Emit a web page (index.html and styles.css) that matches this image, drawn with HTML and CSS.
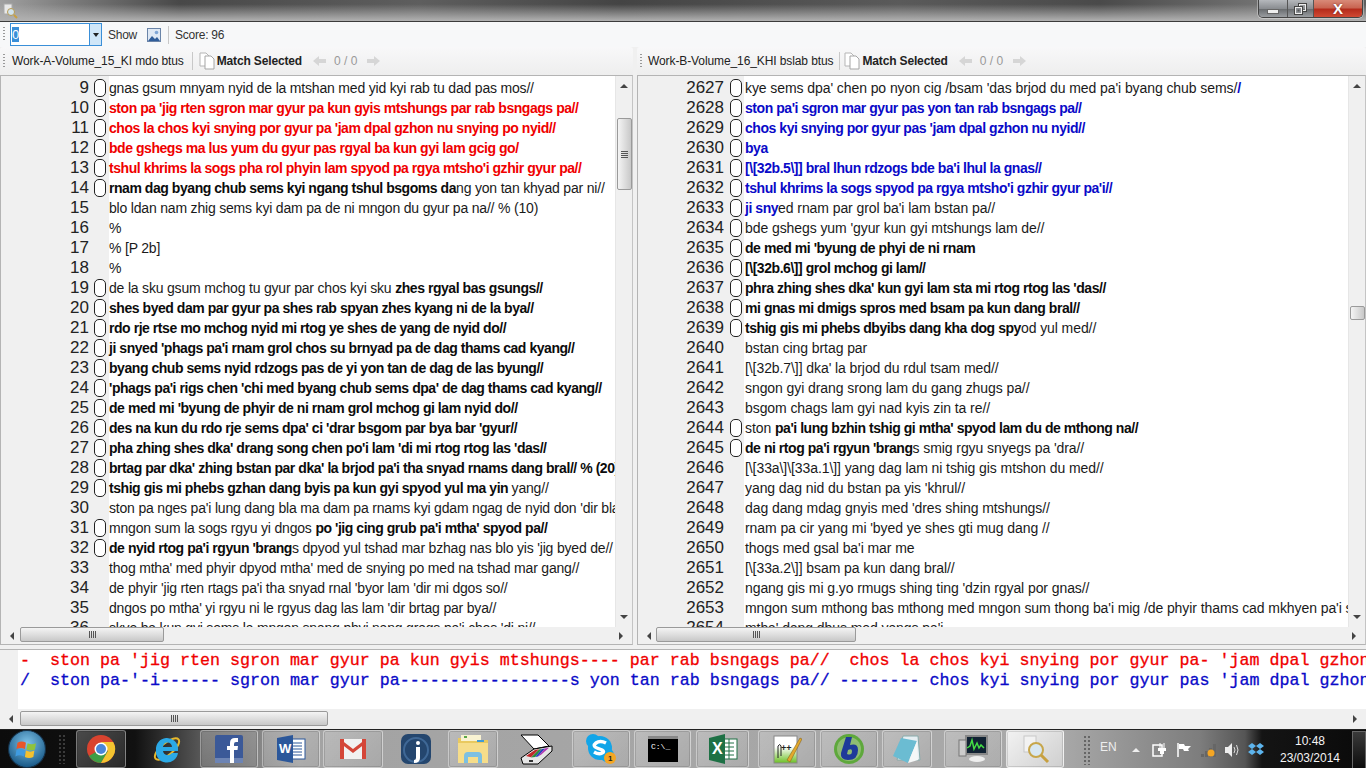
FILE: index.html
```html
<!DOCTYPE html>
<html lang="en">
<head>
<meta charset="utf-8">
<title>Text comparison</title>
<link rel="stylesheet" href="styles.css">
</head>
<body>
<div class="window">
  <header class="titlebar">
    <svg class="app-icon" width="16" height="16" viewBox="0 0 16 16"><rect x="2" y="1" width="8" height="10" fill="#e8e8e8" stroke="#aaa"/><circle cx="9" cy="9" r="3.5" fill="#cfe2ee" stroke="#b89a50"/><path d="M12 12l3 3" stroke="#c9a040" stroke-width="2"/></svg>
    <div class="controls">
      <span class="ctl ctl-min"><i class="glyph-min"></i></span>
      <span class="ctl ctl-max"><svg width="13" height="12" viewBox="0 0 13 12"><rect x="4.500" y=".5" width="8" height="8" fill="none" stroke="#444"/><rect x="5.500" y="1.500" width="6" height="6" fill="none" stroke="#eee"/><rect x=".5" y="3.500" width="8" height="8" fill="#8b8f94" stroke="#444"/><rect x="1.500" y="4.500" width="6" height="6" fill="none" stroke="#eee"/><rect x="3.500" y="6.500" width="2" height="2" fill="#555"/></svg></span>
      <span class="ctl ctl-close">X</span>
    </div>
  </header>

  <div class="toolbar">
    <span class="grip"></span>
    <div class="combo"><span class="combo-text"><span class="sel">0</span></span><span class="combo-btn"><i class="down"></i></span></div>
    <span class="tb-label">Show</span>
    <svg class="pic" width="14" height="14" viewBox="0 0 14 14"><rect x=".5" y=".5" width="13" height="13" fill="#dfe9f5" stroke="#6a84a8"/><path d="M1 13l4-5 3 3 2-2 3 4z" fill="#2f5d9a"/><circle cx="9.500" cy="4.500" r="1.800" fill="#7fa6d6"/></svg>
    <span class="tb-sep"></span>
    <span class="tb-label">Score: 96</span>
  </div>

  <div class="split">
    <section class="pane pane-a">
      <div class="pane-head">
        <span class="grip"></span>
        <span class="work">Work-A-Volume_15_KI mdo btus</span>
        <span class="tb-sep"></span>
        <svg class="doc" width="18" height="18" viewBox="0 0 18 18"><path d="M2 1h6l3 3v10H2z" fill="#fff" stroke="#b5b5b5"/><path d="M7 4h6l3 3v10H7z" fill="#fff" stroke="#a5a5a5"/></svg>
        <strong class="match">Match Selected</strong>
        <svg class="arrow" width="16" height="12" viewBox="0 0 16 12"><path d="M1 6l6-5v3h7v4H7v3z" fill="#d6d6d6"/></svg>
        <span class="count">0 / 0</span>
        <svg class="arrow" width="16" height="12" viewBox="0 0 16 12"><path d="M15 6L9 1v3H2v4h7v3z" fill="#d6d6d6"/></svg>
      </div>
      <div class="pane-frame">
        <div class="pane-body">
          <div class="list">
            <div class="row"><span class="no">9</span><span class="mark"></span><span class="txt">gnas gsum mnyam nyid de la mtshan med yid kyi rab tu dad pas mos//</span></div>
            <div class="row red"><span class="no">10</span><span class="mark"></span><span class="txt">ston pa 'jig rten sgron mar gyur pa kun gyis mtshungs par rab bsngags pa//</span></div>
            <div class="row red"><span class="no">11</span><span class="mark"></span><span class="txt">chos la chos kyi snying por gyur pa 'jam dpal gzhon nu snying po nyid//</span></div>
            <div class="row red"><span class="no">12</span><span class="mark"></span><span class="txt">bde gshegs ma lus yum du gyur pas rgyal ba kun gyi lam gcig go/</span></div>
            <div class="row red"><span class="no">13</span><span class="mark"></span><span class="txt">tshul khrims la sogs pha rol phyin lam spyod pa rgya mtsho'i gzhir gyur pa//</span></div>
            <div class="row"><span class="no">14</span><span class="mark"></span><span class="txt"><b>rnam dag byang chub sems kyi ngang tshul bsgoms da</b>ng yon tan khyad par ni//</span></div>
            <div class="row"><span class="no">15</span><span class="nomark"></span><span class="txt">blo ldan nam zhig sems kyi dam pa de ni mngon du gyur pa na// % (10)</span></div>
            <div class="row"><span class="no">16</span><span class="nomark"></span><span class="txt">%</span></div>
            <div class="row"><span class="no">17</span><span class="nomark"></span><span class="txt">% [P 2b]</span></div>
            <div class="row"><span class="no">18</span><span class="nomark"></span><span class="txt">%</span></div>
            <div class="row"><span class="no">19</span><span class="mark"></span><span class="txt">de la sku gsum mchog tu gyur par chos kyi sku <b>zhes rgyal bas gsungs//</b></span></div>
            <div class="row"><span class="no">20</span><span class="mark"></span><span class="txt"><b>shes byed dam par gyur pa shes rab spyan zhes kyang ni de la bya//</b></span></div>
            <div class="row"><span class="no">21</span><span class="mark"></span><span class="txt"><b>rdo rje rtse mo mchog nyid mi rtog ye shes de yang de nyid do//</b></span></div>
            <div class="row"><span class="no">22</span><span class="mark"></span><span class="txt"><b>ji snyed 'phags pa'i rnam grol chos su brnyad pa de dag thams cad kyang//</b></span></div>
            <div class="row"><span class="no">23</span><span class="mark"></span><span class="txt"><b>byang chub sems nyid rdzogs pas de yi yon tan de dag de las byung//</b></span></div>
            <div class="row"><span class="no">24</span><span class="mark"></span><span class="txt"><b>'phags pa'i rigs chen 'chi med byang chub sems dpa' de dag thams cad kyang//</b></span></div>
            <div class="row"><span class="no">25</span><span class="mark"></span><span class="txt"><b>de med mi 'byung de phyir de ni rnam grol mchog gi lam nyid do//</b></span></div>
            <div class="row"><span class="no">26</span><span class="mark"></span><span class="txt"><b>des na kun du rdo rje sems dpa' ci 'drar bsgom par bya bar 'gyur//</b></span></div>
            <div class="row"><span class="no">27</span><span class="mark"></span><span class="txt"><b>pha zhing shes dka' drang song chen po'i lam 'di mi rtog rtog las 'das//</b></span></div>
            <div class="row"><span class="no">28</span><span class="mark"></span><span class="txt"><b>brtag par dka' zhing bstan par dka' la brjod pa'i tha snyad rnams dang bral// % (20)</b></span></div>
            <div class="row"><span class="no">29</span><span class="mark"></span><span class="txt"><b>tshig gis mi phebs gzhan dang byis pa kun gyi spyod yul ma yin </b>yang//</span></div>
            <div class="row"><span class="no">30</span><span class="nomark"></span><span class="txt">ston pa nges pa'i lung dang bla ma dam pa rnams kyi gdam ngag de nyid don 'dir bla ma'i//</span></div>
            <div class="row"><span class="no">31</span><span class="mark"></span><span class="txt">mngon sum la sogs rgyu yi dngos <b>po 'jig cing grub pa'i mtha' spyod pa//</b></span></div>
            <div class="row"><span class="no">32</span><span class="mark"></span><span class="txt"><b>de nyid rtog pa'i rgyun 'brang</b>s dpyod yul tshad mar bzhag nas blo yis 'jig byed de//</span></div>
            <div class="row"><span class="no">33</span><span class="nomark"></span><span class="txt">thog mtha' med phyir dpyod mtha' med de snying po med na tshad mar gang//</span></div>
            <div class="row"><span class="no">34</span><span class="nomark"></span><span class="txt">de phyir 'jig rten rtags pa'i tha snyad rnal 'byor lam 'dir mi dgos so//</span></div>
            <div class="row"><span class="no">35</span><span class="nomark"></span><span class="txt">dngos po mtha' yi rgyu ni le rgyus dag las lam 'dir brtag par bya//</span></div>
            <div class="row"><span class="no">36</span><span class="nomark"></span><span class="txt">skye ba kun gyi sems la mngon snang phyi nang grags pa'i chos 'di ni//</span></div>
          </div>
          <div class="vscroll">
            <i class="tri up"></i>
            <div class="vtrack"><div class="vthumb vthumb-a"><i class="grip-h"></i></div></div>
            <i class="tri down2"></i>
          </div>
        </div>
        <div class="hscroll">
          <i class="tri left"></i>
          <div class="htrack"><div class="hthumb hthumb-a"><i class="grip-v"></i></div></div>
          <i class="tri right"></i>
        </div>
      </div>
    </section>

    <section class="pane pane-b">
      <div class="pane-head">
        <span class="grip"></span>
        <span class="work">Work-B-Volume_16_KHI bslab btus</span>
        <span class="tb-sep"></span>
        <svg class="doc" width="18" height="18" viewBox="0 0 18 18"><path d="M2 1h6l3 3v10H2z" fill="#fff" stroke="#b5b5b5"/><path d="M7 4h6l3 3v10H7z" fill="#fff" stroke="#a5a5a5"/></svg>
        <strong class="match">Match Selected</strong>
        <svg class="arrow" width="16" height="12" viewBox="0 0 16 12"><path d="M1 6l6-5v3h7v4H7v3z" fill="#d6d6d6"/></svg>
        <span class="count">0 / 0</span>
        <svg class="arrow" width="16" height="12" viewBox="0 0 16 12"><path d="M15 6L9 1v3H2v4h7v3z" fill="#d6d6d6"/></svg>
      </div>
      <div class="pane-frame">
        <div class="pane-body">
          <div class="list">
            <div class="row"><span class="no">2627</span><span class="mark"></span><span class="txt">kye sems dpa' chen po nyon cig /bsam 'das brjod du med pa'i byang chub sems/<b class="ink-blue">/</b></span></div>
            <div class="row blue"><span class="no">2628</span><span class="mark"></span><span class="txt">ston pa'i sgron mar gyur pas yon tan rab bsngags pa//</span></div>
            <div class="row blue"><span class="no">2629</span><span class="mark"></span><span class="txt">chos kyi snying por gyur pas 'jam dpal gzhon nu nyid//</span></div>
            <div class="row blue"><span class="no">2630</span><span class="mark"></span><span class="txt">bya</span></div>
            <div class="row blue"><span class="no">2631</span><span class="mark"></span><span class="txt">[\[32b.5\]] bral lhun rdzogs bde ba'i lhul la gnas//</span></div>
            <div class="row blue"><span class="no">2632</span><span class="mark"></span><span class="txt">tshul khrims la sogs spyod pa rgya mtsho'i gzhir gyur pa'i//</span></div>
            <div class="row"><span class="no">2633</span><span class="mark"></span><span class="txt"><b class="ink-blue">ji sny</b>ed rnam par grol ba'i lam bstan pa//</span></div>
            <div class="row"><span class="no">2634</span><span class="mark"></span><span class="txt">bde gshegs yum 'gyur kun gyi mtshungs lam de//</span></div>
            <div class="row"><span class="no">2635</span><span class="mark"></span><span class="txt"><b>de med mi 'byung de phyi de ni rnam</b></span></div>
            <div class="row"><span class="no">2636</span><span class="mark"></span><span class="txt"><b>[\[32b.6\]] grol mchog gi lam//</b></span></div>
            <div class="row"><span class="no">2637</span><span class="mark"></span><span class="txt"><b>phra zhing shes dka' kun gyi lam sta mi rtog rtog las 'das//</b></span></div>
            <div class="row"><span class="no">2638</span><span class="mark"></span><span class="txt"><b>mi gnas mi dmigs spros med bsam pa kun dang bral//</b></span></div>
            <div class="row"><span class="no">2639</span><span class="mark"></span><span class="txt"><b>tshig gis mi phebs dbyibs dang kha dog spy</b>od yul med//</span></div>
            <div class="row"><span class="no">2640</span><span class="nomark"></span><span class="txt">bstan cing brtag par</span></div>
            <div class="row"><span class="no">2641</span><span class="nomark"></span><span class="txt">[\[32b.7\]] dka' la brjod du rdul tsam med//</span></div>
            <div class="row"><span class="no">2642</span><span class="nomark"></span><span class="txt">sngon gyi drang srong lam du gang zhugs pa//</span></div>
            <div class="row"><span class="no">2643</span><span class="nomark"></span><span class="txt">bsgom chags lam gyi nad kyis zin ta re//</span></div>
            <div class="row"><span class="no">2644</span><span class="mark"></span><span class="txt">ston <b>pa'i lung bzhin tshig gi mtha' spyod lam du de mthong na//</b></span></div>
            <div class="row"><span class="no">2645</span><span class="mark"></span><span class="txt"><b>de ni rtog pa'i rgyun 'brang</b>s smig rgyu snyegs pa 'dra//</span></div>
            <div class="row"><span class="no">2646</span><span class="nomark"></span><span class="txt">[\[33a\]\[33a.1\]] yang dag lam ni tshig gis mtshon du med//</span></div>
            <div class="row"><span class="no">2647</span><span class="nomark"></span><span class="txt">yang dag nid du bstan pa yis 'khrul//</span></div>
            <div class="row"><span class="no">2648</span><span class="nomark"></span><span class="txt">dag dang mdag gnyis med 'dres shing mtshungs//</span></div>
            <div class="row"><span class="no">2649</span><span class="nomark"></span><span class="txt">rnam pa cir yang mi 'byed ye shes gti mug dang //</span></div>
            <div class="row"><span class="no">2650</span><span class="nomark"></span><span class="txt">thogs med gsal ba'i mar me</span></div>
            <div class="row"><span class="no">2651</span><span class="nomark"></span><span class="txt">[\[33a.2\]] bsam pa kun dang bral//</span></div>
            <div class="row"><span class="no">2652</span><span class="nomark"></span><span class="txt">ngang gis mi g.yo rmugs shing ting 'dzin rgyal por gnas//</span></div>
            <div class="row"><span class="no">2653</span><span class="nomark"></span><span class="txt">mngon sum mthong bas mthong med mngon sum thong ba'i mig /de phyir thams cad mkhyen pa'i spyod yul lo//</span></div>
            <div class="row"><span class="no">2654</span><span class="nomark"></span><span class="txt">mtha' dang dbus med yangs pa'i</span></div>
          </div>
          <div class="vscroll">
            <i class="tri up"></i>
            <div class="vtrack"><div class="vthumb vthumb-b"></div></div>
            <i class="tri down2"></i>
          </div>
        </div>
        <div class="hscroll">
          <i class="tri left"></i>
          <div class="htrack"><div class="hthumb hthumb-b"><i class="grip-v"></i></div></div>
          <i class="tri right"></i>
        </div>
      </div>
    </section>
  </div>

  <section class="diff">
    <div class="diff-body">
      <div class="diff-line red-d">-  ston pa 'jig rten sgron mar gyur pa kun gyis mtshungs---- par rab bsngags pa//  chos la chos kyi snying por gyur pa- 'jam dpal gzhon nu</div>
      <div class="diff-line blue-d">/  ston pa-'-i------ sgron mar gyur pa-----------------s yon tan rab bsngags pa// -------- chos kyi snying por gyur pas 'jam dpal gzhon nu</div>
    </div>
    <div class="hscroll hscroll-diff">
      <i class="tri left"></i>
      <div class="htrack"><div class="hthumb hthumb-d"><i class="grip-v"></i></div></div>
      <i class="tri right"></i>
    </div>
  </section>

  <footer class="taskbar">
    <svg class="orb" width="38" height="38" viewBox="0 0 36 36"><defs><radialGradient id="og" cx=".5" cy=".35" r=".7"><stop offset="0" stop-color="#7fc4ea"/><stop offset="1" stop-color="#0f4f7e"/></radialGradient></defs><circle cx="18" cy="18" r="17.500" fill="url(#og)" stroke="#16324a"/><path d="M9 12q4-2 8 0l-1 6q-4-2-8 0z" fill="#e8562a"/><path d="M18.500 12.500q4 2 8 0l-1 6q-4 2-8 0z" fill="#8fc33c"/><path d="M8 19q4-2 8 0l-1 6q-4-2-8 0z" fill="#3f9be0"/><path d="M17 19.500q4 2 8 0l-1 6q-4 2-8 0z" fill="#f5c12e"/></svg>
    <span class="dots"></span>
    <span class="task task-chrome dark"><svg width="30" height="30" viewBox="0 0 30 30"><circle cx="15" cy="15" r="14" fill="#d9432f"/><path d="M15 15L3 22a14 14 0 0 0 12 7l7-12z" fill="#3f9d45"/><path d="M15 8h12.200A14 14 0 0 1 15 29l7-12z" fill="#f4c430"/><circle cx="15" cy="15" r="6.500" fill="#fff"/><circle cx="15" cy="15" r="5" fill="#4a86d8"/></svg></span>
    <span class="gap8"></span>
    <span class="task task-ie plain"><svg width="34" height="32" viewBox="0 0 34 32"><ellipse cx="17" cy="16" rx="15" ry="6" fill="none" stroke="#e8b92c" stroke-width="2" transform="rotate(-40 17 16)"/><path d="M6 17a11 11 0 0 1 22-2v3H13a5 5 0 0 0 9 2h6A11 11 0 0 1 6 17zm7-3h9a4.500 4.500 0 0 0-9 0z" fill="#2ba9e6"/></svg></span>
    <span class="task task-fb"><svg width="28" height="28" viewBox="0 0 28 28"><rect width="28" height="28" rx="2" fill="#3b5998"/><rect y="23" width="28" height="5" fill="#6d84b4"/><path d="M15 28V15h-3v-4h3V8q0-5 5-5h3v4h-2q-2 0-2 2v2h4l-.5 4H19v13z" fill="#fff"/></svg></span>
    <span class="task task-word"><svg width="30" height="28" viewBox="0 0 30 28"><rect x="14" y="4" width="15" height="20" fill="#fff" stroke="#2b579a"/><path d="M17 8h9M17 11h9M17 14h9M17 17h9M17 20h9" stroke="#2b579a"/><path d="M1 3l16-3v28L1 25z" fill="#2b579a"/><text x="3" y="18" class="ico-letter">W</text></svg></span>
    <span class="task task-gmail"><svg width="26" height="22" viewBox="0 0 26 22"><rect y="1" width="26" height="20" fill="#f1f1f1"/><path d="M0 1h4v20H0zM22 1h4v20h-4z" fill="#d44638"/><path d="M0 1l13 10L26 1v4L13 15 0 5z" fill="#d44638"/></svg></span>
    <span class="task task-j plain"><svg width="30" height="30" viewBox="0 0 30 30"><rect width="30" height="30" rx="7" fill="#24466e"/><circle cx="15" cy="16" r="12" fill="none" stroke="#3f6896" stroke-width="2"/><path d="M15 13h4v11q0 5-6 5v-3q2 0 2-2z" fill="#fff"/><circle cx="17" cy="9" r="2" fill="#fff"/></svg></span>
    <span class="task task-folder"><svg width="32" height="30" viewBox="0 0 32 30"><path d="M1 4h12l2 2h16v22H1z" fill="#e9c95f"/><rect x="4" y="1" width="20" height="6" fill="#f8f2d2"/><rect x="7" y="2" width="3" height="2" fill="#5aa648"/><rect x="20" y="6" width="7" height="2" fill="#3f9bd6"/><rect x="1" y="9" width="30" height="20" fill="#f6dd8a"/><path d="M7 29v-7q0-4 4-4h10q4 0 4 4v7h-4v-6H11v6z" fill="#7cc0e2"/></svg></span>
    <span class="gap5"></span>
    <span class="task task-scan plain"><svg width="34" height="31" viewBox="0 0 34 31"><path d="M1 1h17l11 11-15 3z" fill="#fff" stroke="#000"/><path d="M1 24L14 15l18-3v5L18 30H3z" fill="#e6e6e6" stroke="#000"/><path d="M6 22l9-6 4-.7-8 8z" fill="#c0282a"/><path d="M11 23.500l8-8 3-.5-7 8z" fill="#2a8a3a"/><path d="M15 23l7-8 3-.5-7 8z" fill="#2a3fc0"/><path d="M18 22.500l7-8 4-.7-8 7z" fill="#b030b0"/><rect x="9" y="26" width="4" height="2" fill="#333"/></svg></span>
    <span class="task task-skype"><svg width="32" height="32" viewBox="0 0 32 32"><circle cx="15" cy="15" r="12" fill="#12a5e8"/><circle cx="8" cy="8" r="7" fill="#12a5e8"/><circle cx="22" cy="22" r="7" fill="#12a5e8"/><path d="M21 10q-6-3-10 0t1 5l5 2q3 2 0 3-3 2-8-1" fill="none" stroke="#fff" stroke-width="3.500"/><circle cx="25" cy="25" r="6" fill="#f5a623"/><text x="23" y="28" class="ico-badge">1</text></svg></span>
    <span class="task task-cmd"><svg width="30" height="26" viewBox="0 0 30 26"><rect width="30" height="26" fill="#000"/><rect width="30" height="3" fill="#888"/><text x="3" y="13" class="ico-term">C:\_</text></svg></span>
    <span class="gap5"></span>
    <span class="task task-excel"><svg width="30" height="30" viewBox="0 0 30 30"><rect x="14" y="5" width="15" height="20" fill="#fff" stroke="#1e7145"/><path d="M17 9h9M17 13h9M17 17h9M17 21h9M21 5v20" stroke="#1e7145"/><path d="M1 4l16-4v30L1 26z" fill="#1e7145"/><text x="4" y="20" class="ico-letter-x">X</text></svg></span>
    <span class="gap8"></span>
    <span class="task task-npp"><svg width="30" height="30" viewBox="0 0 30 30"><defs><linearGradient id="ng" x1="0" y1="0" x2="0" y2="1"><stop offset=".4" stop-color="#fff"/><stop offset="1" stop-color="#6cc024"/></linearGradient></defs><rect x="2" y="2" width="23" height="27" fill="url(#ng)" stroke="#888"/><text x="9" y="17" class="ico-npp">++</text><path d="M6 24V12q2-3 3 0v10" fill="none" stroke="#222"/><path d="M15 26l13-22 2 1-12 23z" fill="#e3a82c" stroke="#7a5a15" stroke-width=".5"/></svg></span>
    <span class="task task-bab"><svg width="32" height="32" viewBox="0 0 32 32"><circle cx="16" cy="16" r="15" fill="#5ea83c"/><circle cx="16" cy="16" r="12" fill="#8fbc73"/><path d="M13 4h6l-2 8q8-2 8 5 0 10-10 10-8 0-7-7zm2 13l-1 4q5 2 5-3 0-3-4-1z" fill="#1e3a9a"/></svg></span>
    <span class="task task-note"><svg width="30" height="30" viewBox="0 0 30 30"><path d="M11 2h15l2 24H5z" fill="#e6eef2" stroke="#8aa"/><path d="M9 4L25 7 16 29 1 22z" fill="#6bbcd2"/><path d="M25 7l1 19-10 3z" fill="#f5f7f7"/></svg></span>
    <span class="gap12"></span>
    <span class="task task-mon"><svg width="32" height="30" viewBox="0 0 32 30"><rect x="9" y="2" width="21" height="18" fill="#123" stroke="#888" stroke-width="2"/><path d="M10 14l3-2 2-6 2 9 3-6 2 5 2-3 3 3" fill="none" stroke="#4d4" stroke-width="1.500"/><rect x="2" y="6" width="7" height="16" fill="#ccc" stroke="#777"/><ellipse cx="20" cy="25" rx="8" ry="3" fill="#eee"/></svg></span>
    <span class="task task-search active"><svg width="30" height="30" viewBox="0 0 30 30"><rect x="4" y="2" width="12" height="16" fill="#f2f2f2" stroke="#c8c8c8"/><circle cx="16" cy="16" r="7" fill="#d8e7f2" stroke="#c7a64b" stroke-width="2"/><path d="M21 21l7 7" stroke="#c7a040" stroke-width="3"/></svg></span>
    <div class="tray">
      <span class="dots"></span>
      <span class="lang">EN</span>
      <svg class="tray-ic" width="10" height="8" viewBox="0 0 10 8"><path d="M1 6l4-4 4 4z" fill="#eee"/></svg>
      <svg class="tray-ic" width="16" height="16" viewBox="0 0 16 16"><rect x="1" y="3" width="9" height="11" fill="none" stroke="#fff" stroke-width="1.500"/><path d="M6 6h8v3h-2v3H8V9H6z" fill="#fff"/><path d="M8 1v5M12 1v5" stroke="#fff"/></svg>
      <svg class="tray-ic" width="16" height="16" viewBox="0 0 16 16"><path d="M2 1v14" stroke="#fff" stroke-width="1.500"/><path d="M3 2h5l1 2h6l-3 3 1 2H8L7 7H3z" fill="#fff"/></svg>
      <svg class="tray-ic" width="16" height="16" viewBox="0 0 16 16"><path d="M1 12h3v3H1zM5 9h3v6H5z" fill="#666"/><path d="M9 6h3v9H9zM13 2h3v13h-3z" fill="#666"/><circle cx="11" cy="11" r="3.500" fill="#f5a623"/></svg>
      <svg class="tray-ic" width="16" height="16" viewBox="0 0 16 16"><path d="M1 5h3l4-4v14l-4-4H1z" fill="#eee"/><path d="M10 5q2 3 0 6M12.500 3q3 5 0 10" fill="none" stroke="#ddd"/></svg>
      <svg class="tray-ic" width="16" height="16" viewBox="0 0 16 16"><path d="M4 1L0 4l4 3 4-3zM12 1L8 4l4 3 4-3zM4 7L0 10l4 3 4-3zM12 7l-4 3 4 3 4-3z" fill="#5db5ee"/></svg>
      <div class="clock"><span>10:48</span><span>23/03/2014</span></div>
      <span class="show-desk"></span>
    </div>
  </footer>
</div>
</body>
</html>
```

FILE: styles.css
```css
* { box-sizing: border-box; }
html, body { margin: 0; padding: 0; height: 768px; overflow: hidden; }
body { font-family: "Liberation Sans", Arial, sans-serif; font-size: 14px; color: #111; background: #f0f0f0; }
i { display: block; }
.window { width: 1366px; height: 768px; display: flex; flex-direction: column; overflow: hidden; }

/* title bar */
.titlebar { height: 22px; flex: none; display: flex; align-items: center; padding-left: 2px; border-bottom: 1px solid #3c3c3c;
  background:
    linear-gradient(rgba(170,170,170,0) 20%, #b2b2b2 100%),
    linear-gradient(90deg, #a0a0a0 0, #808080 60px, #484848 180px, #5e5e5e 420px, #444 620px, #5a5a5a 900px, #4a4a4a 1100px, #727272 1260px, #5e5e5e 100%); }
.app-icon { flex: none; }
.controls { margin-left: auto; margin-right: 3px; align-self: flex-start; display: flex; height: 18px; border: 1px solid #444; border-top: 0; border-radius: 0 0 5px 5px; overflow: hidden; box-shadow: 0 0 0 1px rgba(255,255,255,.35); }
.ctl { display: flex; align-items: center; justify-content: center; height: 100%; }
.ctl-min, .ctl-max { background: linear-gradient(#b5b8bc, #8a8d91 50%, #6a6d70 55%, #9a9da1); border-right: 1px solid #555; }
.ctl-min { width: 29px; }
.ctl-max { width: 26px; }
.ctl-close { width: 48px; color: #fff; font-weight: bold; font-size: 15px; background: linear-gradient(#d88a78, #c96552 45%, #b52c1c 55%, #d04a34); text-shadow: 0 0 2px #622; }
.glyph-min { width: 12px; height: 5px; margin-top: 5px; background: #eee; border: 1px solid #666; }

/* toolbar */
.toolbar { height: 25px; flex: none; display: flex; align-items: center; background: #f7f8f9; font-size: 12px; color: #333; padding-left: 3px; }
.grip { width: 2px; height: 15px; flex: none; background-image: linear-gradient(#999 50%, transparent 50%); background-size: 2px 3px; }
.combo { margin-left: 5px; width: 92px; height: 23px; display: flex; border: 1px solid #3a8fd8; background: #fff; }
.combo-text { flex: 1; padding: 3px 0 0 1px; font-size: 13px; line-height: 15px; }
.sel { display: inline-block; background: #3a8fd8; color: #fff; width: 7px; height: 15px; overflow: hidden; }
.combo-btn { width: 12px; display: flex; align-items: center; justify-content: center; background: #cfe6f8; border-left: 1px solid #3a8fd8; }
.down { width: 0; height: 0; border: 3px solid transparent; border-top: 4px solid #222; border-bottom: 0; }
.tb-label { margin-left: 6px; white-space: nowrap; letter-spacing: -.25px; }
.pic { margin-left: 10px; flex: none; }
.tb-sep { width: 1px; height: 18px; flex: none; margin-left: 7px; background: #c8c8c8; }

/* split */
.split { height: 598px; flex: none; display: flex; gap: 4px; }
.pane { display: flex; flex-direction: column; min-width: 0; }
.pane-a { width: 633px; }
.pane-b { width: 729px; flex: 1; }
.pane-head { height: 28px; flex: none; display: flex; align-items: center; padding-left: 3px; font-size: 12px; color: #222; background: linear-gradient(#f8f8f9, #eeeeee); border-radius: 3px 3px 0 0; }
.work { margin-left: 6px; white-space: nowrap; letter-spacing: -.1px; }
.pane-a .work { margin-left: 7px; }
.doc { margin-left: 3px; flex: none; }
.pane-a .tb-sep { margin-left: 8px; }
.pane-b .tb-sep { margin-left: 6px; }
.pane-a .doc { margin-left: 5px; }
.match { margin-left: 1px; white-space: nowrap; color: #222; letter-spacing: -.15px; }
.arrow { margin-left: 10px; flex: none; }
.count { margin-left: 6px; color: #999; white-space: nowrap; }
.pane-head .count + .arrow { margin-left: 8px; }

.pane-frame { flex: 1; min-height: 0; display: flex; flex-direction: column; border: 1px solid #b4b4b4; border-right-color: #c4c4c4; background: #f0f0f0; }
.pane-body { flex: 1; min-height: 0; display: flex; }
.list { flex: 1; min-width: 0; overflow: hidden; padding-top: 2px; background: linear-gradient(90deg, #f0f0f0 108px, #fff 108px); }
.pane-b .list { background: linear-gradient(90deg, #f0f0f0 106px, #fff 106px); }
.row { height: 20px; display: flex; align-items: center; white-space: nowrap; }
.no { width: 88px; flex: none; text-align: right; font-size: 17px; color: #222; }
.pane-b .no { width: 86px; }
.mark { width: 12px; height: 18px; flex: none; margin-left: 5px; border: 1px solid #222; border-radius: 5px; background: #fff; }
.nomark { width: 12px; flex: none; margin-left: 5px; }
.pane-b .mark, .pane-b .nomark { margin-left: 6px; }
.txt { margin-left: 3px; font-size: 14px; color: #1a1a1a; letter-spacing: -.19px; }
.pane-b .txt { letter-spacing: -.08px; }
.txt b, .pane-b .txt b { color: #0c0c0c; letter-spacing: -.45px; }
.txt b.ink-blue { color: #0a0ac8; }
.red .txt, .pane-b .red .txt { color: #f00000; font-weight: bold; letter-spacing: -.45px; }
.blue .txt, .pane-b .blue .txt { color: #0a0ac8; font-weight: bold; letter-spacing: -.45px; }

/* scrollbars */
.vscroll { width: 17px; flex: none; display: flex; flex-direction: column; align-items: center; background: #f0f0f0; border-left: 1px solid #e6e6e6; }
.vtrack { flex: 1; width: 100%; display: flex; flex-direction: column; }
.vthumb { width: 15px; margin: 0 auto; display: flex; align-items: center; justify-content: center; border: 1px solid #9a9a9a; border-radius: 2px; background: linear-gradient(90deg, #f4f4f4, #dcdcdc 55%, #c8c8c8); flex: none; }
.vthumb-a { height: 72px; margin-top: 24px; }
.vthumb-b { height: 14px; margin-top: 212px; }
.grip-h { width: 7px; height: 7px; background-image: linear-gradient(#555 1px, transparent 1px); background-size: 7px 2px; }
.grip-v { width: 7px; height: 7px; background-image: linear-gradient(90deg, #555 1px, transparent 1px); background-size: 2px 7px; }
.hscroll { height: 17px; flex: none; display: flex; align-items: center; background: #f0f0f0; }
.htrack { flex: 1; height: 100%; display: flex; }
.hthumb { height: 15px; display: flex; align-items: center; justify-content: center; border: 1px solid #9a9a9a; border-radius: 2px; background: linear-gradient(#f4f4f4, #dcdcdc 55%, #c8c8c8); }
.hthumb-a { width: 144px; }
.hthumb-b { width: 200px; }
.hthumb-d { width: 308px; }
.tri { width: 0; height: 0; flex: none; border: 4px solid transparent; }
.tri.left { border-left: 0; border-right-color: #444; margin: 0 6px 0 9px; }
.pane-b .tri.left { margin-right: 5px; }
.tri.right { border-right: 0; border-left-color: #444; margin: 0 9px 0 9px; }
.tri.up { border-top: 0; border-bottom-color: #444; margin: 8px 0 6px; }
.tri.down2 { border-bottom: 0; border-top-color: #444; margin: 6px 0 8px; }

/* diff */
.diff { height: 80px; flex: none; margin-top: 4px; border-top: 1px solid #b4b4b4; display: flex; flex-direction: column; background: #f0f0f0; }
.diff-body { height: 59px; flex: none; overflow: hidden; padding: 1px 0 0 20px; background: linear-gradient(90deg, #f0f0f0 18px, #fff 18px); }
.diff-line { height: 20px; line-height: 20px; white-space: pre; font-family: "Liberation Mono", "Courier New", monospace; font-size: 16.67px; -webkit-text-stroke: .3px; }
.red-d { color: #f00000; }
.blue-d { color: #0a0ac8; }
.hscroll-diff { height: 19px; }
.hscroll-diff .htrack { padding-top: 2px; }
.hscroll-diff .tri.left { margin-right: 7px; }

/* taskbar */
.taskbar { height: 40px; flex: none; display: flex; align-items: stretch; position: relative; border-top: 1px solid #222;
  background: linear-gradient(90deg, #0c0c0c 0, #111 135px, #5c5c5c 205px, #a3a3a3 300px, #a9a9a9 1060px, #7d7d7d 1200px, #555 1245px, #141414 1262px, #0a0a0a 100%); }
.orb { margin: 0 0 0 8px; flex: none; }
.dots { width: 9px; flex: none; height: 30px; background-image: radial-gradient(#666 1px, transparent 1px); background-size: 4px 4px; }
.taskbar > .dots { margin: 4px 9px 4px 12px; opacity: .5; }
.task { flex: none; display: flex; align-items: center; justify-content: center; height: 38px; margin-right: 4px; border: 1px solid rgba(255,255,255,.35); border-radius: 3px; background: linear-gradient(135deg, rgba(255,255,255,.25), rgba(255,255,255,.05)); box-shadow: inset 0 0 0 1px rgba(0,0,0,.12); }
.task.plain { border-color: transparent; background: transparent; box-shadow: none; }
.task.dark { background: linear-gradient(135deg, #4a4a4a, #2a2a2a); }
.task.active { background: linear-gradient(135deg, #f2f2f2, #cfcfcf); }
.task-chrome { width: 50px; }
.gap8 { width: 4px; flex: none; }
.gap5 { width: 5px; flex: none; }
.gap12 { width: 8px; flex: none; }
.task-ie { width: 66px; margin-right: 0; }
.task-fb { width: 58px; }
.task-word { width: 58px; margin-right: 3px; }
.task-gmail { width: 60px; margin-right: 1px; }
.task-j { width: 63px; margin-right: 1px; }
.task-folder { width: 50px; margin-right: 0; }
.task-scan { width: 68px; margin-right: 1px; }
.task-skype { width: 58px; }
.task-cmd { width: 57px; margin-right: 0; }
.task-excel { width: 53px; margin-right: 5px; }
.task-npp { width: 58px; }
.task-bab { width: 58px; }
.task-note { width: 50px; }
.task-mon { width: 58px; }
.task-search { width: 58px; margin-right: 0; }
.ico-letter { font: bold 13px "Liberation Sans", sans-serif; fill: #fff; }
.ico-letter-x { font: bold 16px "Liberation Sans", sans-serif; fill: #fff; }
.ico-badge { font: bold 8px "Liberation Sans", sans-serif; fill: #222; }
.ico-term { font: 8px "Liberation Mono", monospace; fill: #fff; }
.ico-npp { font: bold 9px "Liberation Sans", sans-serif; fill: #222; }

.tray { flex: 1; display: flex; align-items: center; color: #fff; min-width: 0; }
.tray > .dots { margin: 0 0 0 19px; height: 30px; }
.lang { margin: -6px 0 0 8px; font-size: 12px; color: #eee; width: 24px; }
.tray-ic { margin-left: 8px; flex: none; }
.lang + .tray-ic { margin-left: 7px; margin-right: 3px; }
.clock { margin-left: 4px; width: 84px; display: flex; flex-direction: column; align-items: center; font-size: 12px; line-height: 17px; color: #f4f4f4; }
.show-desk { width: 14px; height: 38px; flex: none; border: 1px solid #666; background: linear-gradient(#3a3a3a, #0c0c0c); }
```
